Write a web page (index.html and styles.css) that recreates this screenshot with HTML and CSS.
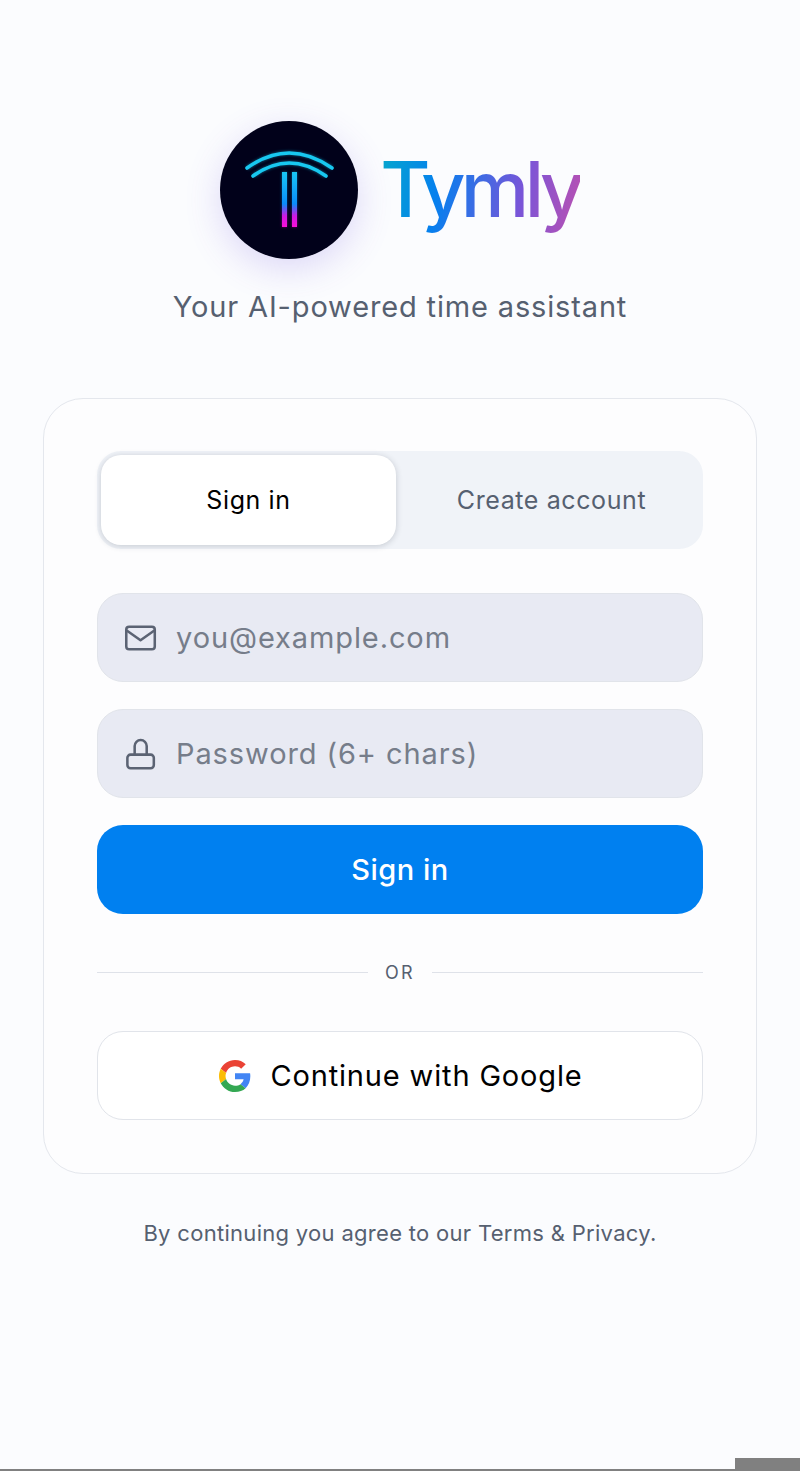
FILE: index.html
```html
<!DOCTYPE html>
<html>
<head>
    <title>Tymly</title>
    <link rel="stylesheet" href="styles.css">
</head>
<body>
    <div class="brand">
        <div class="logo-row">
            <div class="logo">
                <svg width="138" height="138" viewBox="0 0 138 138">
                    <defs>
                        <linearGradient id="stem" x1="0" y1="51" x2="0" y2="106" gradientUnits="userSpaceOnUse">
                            <stop offset="0" stop-color="#19c8f4"/>
                            <stop offset="0.58" stop-color="#0a8cfa"/>
                            <stop offset="0.8" stop-color="#d018e4"/>
                            <stop offset="1" stop-color="#f810d8"/>
                        </linearGradient>
                        <filter id="glow" x="-30%" y="-30%" width="160%" height="160%">
                            <feGaussianBlur stdDeviation="1.6"/>
                        </filter>
                    </defs>
                    <circle cx="69" cy="69" r="69" fill="#01011a"/>
                    <!-- soft neon halo behind the strokes -->
                    <g fill="none" stroke="#12c6ee" stroke-width="4" opacity="0.45" filter="url(#glow)">
                        <path d="M27 47 Q69 17 112 47"/>
                        <path d="M33 55 Q69 29 106 55"/>
                    </g>
                    <g opacity="0.5" filter="url(#glow)">
                        <rect x="62" y="51" width="5" height="55" fill="url(#stem)"/>
                        <rect x="72" y="51" width="5" height="55" fill="url(#stem)"/>
                    </g>
                    <g fill="none" stroke="#18c8f0" stroke-width="3.6" stroke-linecap="round">
                        <path d="M27 47 Q69 17 112 47"/>
                        <path d="M33 55 Q69 29 106 55"/>
                    </g>
                    <rect x="62" y="51" width="5" height="55" fill="url(#stem)"/>
                    <rect x="72" y="51" width="5" height="55" fill="url(#stem)"/>
                </svg>
            </div>
            <h1 class="wordmark">Tymly</h1>
        </div>
        <p class="tagline">Your AI-powered time assistant</p>
    </div>

    <div class="card">
        <div class="tabs">
            <div class="tab active">Sign in</div>
            <div class="tab">Create account</div>
        </div>

        <div class="field">
            <svg class="field-icon" width="38" height="38" viewBox="0 0 24 24" fill="none" stroke="#5b6373" stroke-width="1.6" stroke-linecap="round" stroke-linejoin="round">
                <rect x="2.700" y="4.900" width="18" height="14.200" rx="1.800"/>
                <path d="M3.200 7.400l8.500 6 8.500-6"/>
            </svg>
            <input class="field-input" placeholder="you@example.com" autocomplete="off">
        </div>
        <div class="field">
            <svg class="field-icon" width="38" height="38" viewBox="0 0 24 24" fill="none" stroke="#5b6373" stroke-width="1.600" stroke-linecap="round" stroke-linejoin="round">
                <rect x="3.400" y="12.400" width="16.700" height="8.600" rx="2"/>
                <path d="M8 12.400V7a3.800 3.800 0 0 1 7.600 0v5.400"/>
            </svg>
            <input class="field-input" placeholder="Password (6+ chars)" autocomplete="off">
        </div>

        <button class="submit">Sign in</button>

        <div class="divider"><span>OR</span></div>

        <button class="google">
            <svg width="32" height="32" viewBox="0 0 48 48">
                <path fill="#EA4335" d="M24 9.500c3.500 0 6.700 1.200 9.200 3.600l6.900-6.900C35.900 2.400 30.500 0 24 0 14.600 0 6.500 5.400 2.600 13.200l8 6.200C12.500 13.600 17.800 9.500 24 9.500z"/>
                <path fill="#4285F4" d="M47 24.500c0-1.600-.1-3.100-.4-4.500H24v9h12.900c-.6 3-2.200 5.500-4.700 7.200l7.700 6C44.400 38 47 31.800 47 24.500z"/>
                <path fill="#FBBC05" d="M10.600 28.600c-.5-1.400-.8-3-.8-4.600s.3-3.200.8-4.600l-8-6.200C.9 16.500 0 20.100 0 24s.9 7.500 2.600 10.800l8-6.200z"/>
                <path fill="#34A853" d="M24 48c6.500 0 11.900-2.100 15.900-5.800l-7.700-6c-2.200 1.500-4.900 2.300-8.200 2.300-6.200 0-11.500-4.100-13.400-9.900l-8 6.200C6.500 42.600 14.600 48 24 48z"/>
            </svg>
            <span>Continue with Google</span>
        </button>
    </div>

    <p class="legal">By continuing you agree to our Terms &amp; Privacy.</p>

    <!-- window edge along the bottom -->
    <div class="edge-line"></div>
    <div class="edge-block"></div>
</body>
</html>
```

FILE: styles.css
```css
html, body {
    margin: 0;
    padding: 0;
}

body {
    position: relative;
    height: 1471px;
    overflow: hidden;
    box-sizing: border-box;
    padding: 120px 43px 0;
    display: flex;
    flex-direction: column;
    align-items: stretch;
    background-color: #fbfcfe;
    font-family: Inter, "Noto Sans", sans-serif;
    color: #000;
}

.brand {
    display: flex;
    flex-direction: column;
    align-items: center;
}

.logo-row {
    display: flex;
    align-items: center;
    gap: 22px;
}

.logo {
    width: 138px;
    height: 138px;
    margin-top: 1px;
    border-radius: 50%;
    box-shadow: 0 10px 36px rgba(98, 70, 220, 0.2);
}

.logo svg {
    display: block;
}

.wordmark {
    margin: -1px 0 0;
    font-size: 77px;
    line-height: 88px;
    font-weight: 500;
    letter-spacing: -4.600px;
    background: linear-gradient(100deg, #06a8cc 0%, #0580ee 30%, #7a55d8 70%, #bb50b0 100%);
    -webkit-background-clip: text;
    background-clip: text;
    color: transparent;
}

.tagline {
    margin: 30px 0 0;
    font-size: 29px;
    line-height: 36px;
    letter-spacing: 0.85px;
    color: #566070;
}

.card {
    margin-top: 73px;
    height: 776px;
    box-sizing: border-box;
    padding: 52px 53px;
    background-color: #fdfdfe;
    border: 1px solid #e4e7ed;
    border-radius: 40px;
    display: flex;
    flex-direction: column;
}

.tabs {
    display: flex;
    gap: 4px;
    height: 98px;
    box-sizing: border-box;
    padding: 4px 0 4px 4px;
    background-color: #f0f3f8;
    border-radius: 24px;
}

.tab {
    flex: 1;
    display: flex;
    align-items: center;
    justify-content: center;
    font-size: 25px;
    letter-spacing: 0.6px;
    color: #566070;
    border-radius: 20px;
}

.tab.active {
    flex: 0 0 295px;
    background-color: #fff;
    color: #000;
    box-shadow: 0 1px 6px rgba(40, 50, 70, 0.22);
}

.field {
    display: flex;
    align-items: center;
    gap: 16px;
    height: 89px;
    box-sizing: border-box;
    margin-top: 44px;
    padding: 0 25px 0 24px;
    background-color: #e8eaf3;
    border: 1px solid #e1e4ea;
    border-radius: 26px;
}

.field + .field {
    margin-top: 27px;
}

.field-icon {
    flex-shrink: 0;
}

.field-input {
    flex: 1;
    min-width: 0;
    border: none;
    outline: none;
    padding: 0;
    background: transparent;
    font-family: inherit;
    font-size: 29px;
    letter-spacing: 0.9px;
}

.field-input::placeholder {
    color: #767d8a;
    opacity: 1;
}

.submit {
    margin-top: 27px;
    height: 89px;
    border: none;
    border-radius: 26px;
    background-color: #0080f0;
    color: #fff;
    font-family: inherit;
    font-size: 29px;
    font-weight: 500;
    letter-spacing: 0.5px;
}

.divider {
    display: flex;
    align-items: center;
    gap: 17px;
    margin-top: 46px;
    height: 24px;
    font-size: 18px;
    letter-spacing: 2.300px;
    color: #566070;
}

.divider::before,
.divider::after {
    content: "";
    flex: 1;
    height: 1px;
    background-color: #dfe2e9;
}

.google {
    display: flex;
    align-items: center;
    justify-content: center;
    gap: 19px;
    margin-top: 47px;
    height: 89px;
    box-sizing: border-box;
    padding-left: 8px;
    background-color: #fff;
    border: 1px solid #e1e4ea;
    border-radius: 26px;
    color: #000;
    font-family: inherit;
    font-size: 29px;
    font-weight: 400;
    letter-spacing: 0.85px;
}

.legal {
    margin: 45px 0 0;
    text-align: center;
    font-size: 22px;
    line-height: 28px;
    letter-spacing: 0.3px;
    color: #566070;
}

.edge-line {
    position: absolute;
    left: 0;
    right: 0;
    bottom: 0;
    height: 2px;
    background-color: #808080;
}

.edge-block {
    position: absolute;
    right: 0;
    bottom: 0;
    width: 65px;
    height: 13px;
    background-color: #808080;
}
```
